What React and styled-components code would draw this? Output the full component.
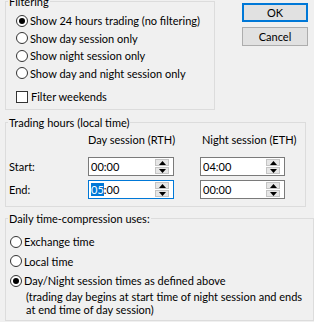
import styled, { createGlobalStyle } from "styled-components";

const GlobalStyle = createGlobalStyle`
  html, body {
    margin: 0;
    padding: 0;
    background: #f0f0f0;
  }
`;

const Dialog = styled.div`
  width: 314px;
  height: 322px;
  overflow: hidden;
  box-sizing: border-box;
  padding: 1px 0 0 5px;
  background: #f0f0f0;
  font-family: Lato, "Liberation Sans", sans-serif;
  font-size: 11px;
  color: #000;
`;

const TopRow = styled.div`
  display: flex;
  align-items: flex-start;
`;

const Group = styled.div`
  box-sizing: border-box;
  width: ${(p) => p.$w}px;
  height: ${(p) => p.$h}px;
  margin-top: ${(p) => p.$top || 0}px;
  border: 1px solid #dcdcdc;
`;

const Legend = styled.div`
  width: fit-content;
  height: 13px;
  line-height: 13px;
  margin: -7px 0 0 2px;
  padding: 0 1px;
  background: #f0f0f0;
  white-space: nowrap;
`;

const OptionList = styled.div`
  display: flex;
  flex-direction: column;
  margin-top: ${(p) => p.$top}px;
`;

const Option = styled.label`
  display: flex;
  align-items: center;
  gap: ${(p) => p.$gap}px;
  height: ${(p) => p.$h}px;
  padding-left: ${(p) => p.$indent}px;
  margin-top: ${(p) => p.$top || 0}px;
  white-space: nowrap;
`;

const Radio = styled.span`
  box-sizing: border-box;
  width: 12px;
  height: 12px;
  flex: none;
  border: 1px solid #333;
  border-radius: 50%;
  background: #fff;
  display: flex;
  align-items: center;
  justify-content: center;

  &::after {
    content: "";
    width: 6px;
    height: 6px;
    border-radius: 50%;
    background: ${(p) => (p.$checked ? "#000" : "transparent")};
  }
`;

const Check = styled.span`
  box-sizing: border-box;
  width: 12px;
  height: 12px;
  flex: none;
  border: 1px solid #333;
  background: #fff;
`;

const ButtonColumn = styled.div`
  display: flex;
  flex-direction: column;
  gap: 5px;
  margin: 2px 0 0 27px;
`;

const Button = styled.button`
  box-sizing: border-box;
  width: 66px;
  height: 19px;
  padding: 0;
  font: inherit;
  color: #000;
  background: #e1e1e1;
  border: 1px solid ${(p) => (p.$default ? "#0078d7" : "#adadad")};
  box-shadow: ${(p) => (p.$default ? "inset 0 0 0 1px #0078d7" : "none")};
`;

const HoursGrid = styled.div`
  display: grid;
  grid-template-columns: 53px 86px 85px;
  column-gap: 26px;
  align-items: center;
  padding-left: 3px;
`;

const HeadRow = styled(HoursGrid)`
  height: 13px;
  line-height: 13px;
  margin-top: 4px;
`;

const FieldRow = styled(HoursGrid)`
  height: 19px;
  margin-top: ${(p) => p.$top}px;
`;

const ColumnTitle = styled.span`
  padding-left: ${(p) => p.$pad || 0}px;
  white-space: nowrap;
`;

const SpinBox = styled.div`
  box-sizing: border-box;
  height: 19px;
  display: flex;
  align-items: center;
  padding: 0 4px 0 2px;
  background: #fff;
  border: 1px solid ${(p) => (p.$focused ? "#0078d7" : "#7a7a7a")};
`;

const Selected = styled.span`
  background: #0078d7;
  color: #fff;
`;

const Spin = styled.div`
  margin-left: auto;
  display: flex;
  flex-direction: column;
  gap: 1px;
`;

const SpinButton = styled.div`
  box-sizing: border-box;
  width: 14px;
  height: 7px;
  display: flex;
  align-items: center;
  justify-content: center;
  background: #e6e6e6;
  border: 1px solid #c4c4c4;
`;

const Note = styled.div`
  padding-left: 20px;
  line-height: 13px;
  margin-top: ${(p) => p.$top}px;
`;

function Arrow({ up }) {
  return (
    <svg width="7" height="4" viewBox="0 0 7 4">
      <path d={up ? "M0 4 L3.5 0 L7 4 Z" : "M0 0 L3.5 4 L7 0 Z"} fill="#000" />
    </svg>
  );
}

function TimeField({ value, focused }) {
  return (
    <SpinBox $focused={focused}>
      <span>
        {focused ? (
          <>
            <Selected>{value.slice(0, 2)}</Selected>
            {value.slice(2)}
          </>
        ) : (
          value
        )}
      </span>
      <Spin>
        <SpinButton>
          <Arrow up />
        </SpinButton>
        <SpinButton>
          <Arrow />
        </SpinButton>
      </Spin>
    </SpinBox>
  );
}

const filterOptions = [
  "Show 24 hours trading (no filtering)",
  "Show day session only",
  "Show night session only",
  "Show day and night session only",
];

const compressionOptions = ["Exchange time", "Local time", "Day/Night session times as defined above"];

export default function App() {
  return (
    <>
      <GlobalStyle />
      <Dialog>
        <TopRow>
          <Group $w={210} $h={109}>
            <Legend>Filtering</Legend>
            <OptionList $top={4}>
              {filterOptions.map((text, i) => (
                <Option key={text} $h={17.5} $indent={10} $gap={2}>
                  <Radio $checked={i === 0} />
                  {text}
                </Option>
              ))}
              <Option $h={17.5} $indent={10} $gap={3} $top={6}>
                <Check />
                Filter weekends
              </Option>
            </OptionList>
          </Group>
          <ButtonColumn>
            <Button $default>OK</Button>
            <Button>Cancel</Button>
          </ButtonColumn>
        </TopRow>

        <Group $w={301} $h={85} $top={12}>
          <Legend>Trading hours (local time)</Legend>
          <HeadRow>
            <span />
            <ColumnTitle>Day session (RTH)</ColumnTitle>
            <ColumnTitle $pad={2}>Night session (ETH)</ColumnTitle>
          </HeadRow>
          <FieldRow $top={11}>
            <span>Start:</span>
            <TimeField value="00:00" />
            <TimeField value="04:00" />
          </FieldRow>
          <FieldRow $top={4}>
            <span>End:</span>
            <TimeField value="05:00" focused />
            <TimeField value="00:00" />
          </FieldRow>
        </Group>

        <Group $w={309} $h={103} $top={11}>
          <Legend>Daily time-compression uses:</Legend>
          <OptionList $top={7}>
            {compressionOptions.map((text, i) => (
              <Option key={text} $h={19.5} $indent={4} $gap={2}>
                <Radio $checked={i === 2} />
                {text}
              </Option>
            ))}
          </OptionList>
          <Note $top={-1}>
            (trading day begins at start time of night session and ends
            <br />
            at end time of day session)
          </Note>
        </Group>
      </Dialog>
    </>
  );
}
